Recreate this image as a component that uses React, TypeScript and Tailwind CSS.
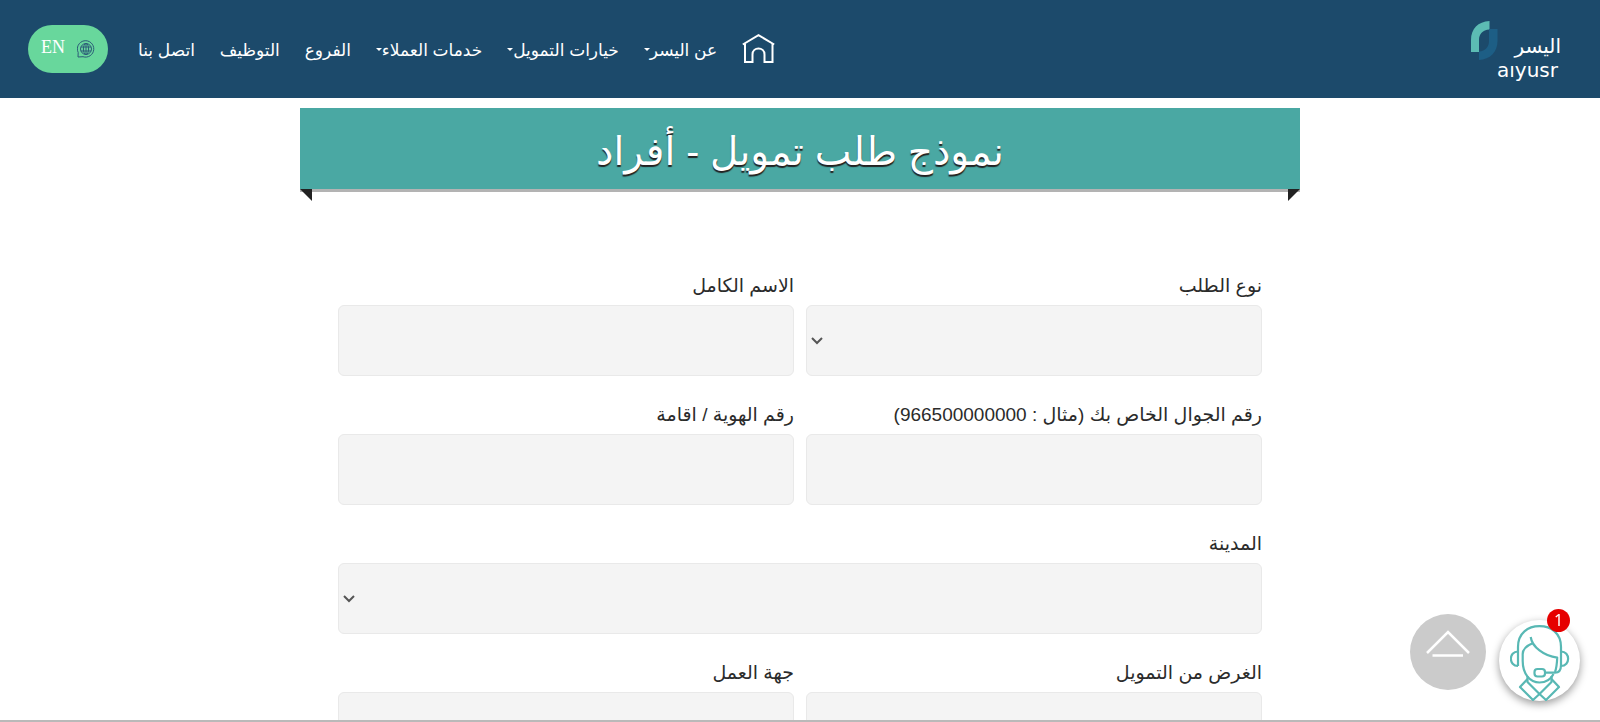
// App — صفحة طلب التمويل للأفراد
import { type ReactNode } from 'react';

interface NavItem {
  label: string;
  hasMenu?: boolean;
}

const NAV_ITEMS: NavItem[] = [
  { label: 'عن اليسر', hasMenu: true },
  { label: 'خيارات التمويل', hasMenu: true },
  { label: 'خدمات العملاء', hasMenu: true },
  { label: 'الفروع' },
  { label: 'التوظيف' },
  { label: 'اتصل بنا' },
];

function Logo() {
  return (
    <svg viewBox="0 0 92 64" className="w-[92px] h-16" role="img" aria-label="اليسر">
      <path d="M19.500 0V8.500C12.500 9 9 13 9 19V31H1V19C1 8 8 0.500 19.500 0Z" fill="#5cbcb4" />
      <path d="M19 8H27.500V20C27.500 31 20 38.500 9 39V30.500C15.500 30 19 26 19 20Z" fill="#1d5e85" />
      <text
        x="91"
        y="32"
        textAnchor="start"
        direction="rtl"
        fill="#fff"
        fontSize="20"
        fontFamily="'DejaVu Sans', sans-serif"
      >
        اليسر
      </text>
      <text x="27" y="56" direction="ltr" fill="#fff" fontSize="20" fontFamily="'DejaVu Sans', sans-serif">
        aıyusr
      </text>
    </svg>
  );
}

function HomeIcon() {
  return (
    <svg viewBox="0 0 33 30" className="w-[33px] h-[30px]" fill="none" stroke="#fff" strokeWidth="2" aria-hidden="true">
      <path d="M0.800 10.500L16.500 1.200L32.200 10.500" />
      <path d="M3 9.500V28H10.500V20.500C10.500 12.500 22.500 12.500 22.500 20.500V28H30.500V9.500" />
    </svg>
  );
}

function GlobeIcon() {
  return (
    <svg viewBox="0 0 18 18" className="w-[18px] h-[18px]" fill="none" stroke="#2c5c78" aria-hidden="true">
      <path d="M1 17L1.200 12.500A8.200 8.200 0 1 1 6 16.700Z" />
      <circle cx="9" cy="9" r="5.500" />
      <ellipse cx="9" cy="9" rx="2.600" ry="5.500" />
      <path d="M9 3.500V14.500M4 7H14M4 11H14" />
    </svg>
  );
}

function AgentIcon() {
  return (
    <svg
      viewBox="0 0 60 76"
      className="w-[60px] h-[76px]"
      fill="none"
      stroke="#58b8b4"
      strokeWidth="2.2"
      strokeLinejoin="round"
      aria-hidden="true"
    >
      <path d="M8 41V22C8 8 18 1.200 29.500 1.200S51 8 51 22V40C51 45 49 47.700 45 47.700H35" />
      <path d="M8 26.500C-1.500 26.500-1.500 41 8 41M51 26.500C60.500 26.500 60.500 41 51 41" />
      <path d="M20.700 12C22 22 34 31 47.200 32.700C47 38 46.500 43 45 47M23 18C16 21 12.700 24 12.700 29V36C12.700 49 20 57.500 29.500 57.500C36 57.500 41 54 43.500 49" />
      <rect x="24.500" y="44" width="10.500" height="7.500" rx="3" />
      <path d="M17.500 51V57L29.500 69L41.500 57V51" />
      <path d="M17.500 54L10 62L23 75L29.500 69L36 75L49 62L41.500 54" />
    </svg>
  );
}

function Header() {
  return (
    <header className="flex items-center justify-between h-[98px] shrink-0 pr-[38px] pl-7 bg-[#1c4a6b] text-white">
      <a href="#" className="pt-2">
        <Logo />
      </a>
      <div className="flex items-center w-[747px]">
        <nav className="flex flex-1 items-center justify-between text-[17px]">
          <a href="#" aria-label="الرئيسية">
            <HomeIcon />
          </a>
          {NAV_ITEMS.map((item) => (
            <a key={item.label} href="#" className="flex items-center pt-1 whitespace-nowrap">
              {item.label}
              {item.hasMenu && (
                <span className="mb-1 border-x-[3px] border-t-[3px] border-x-transparent border-t-white" />
              )}
            </a>
          ))}
        </nav>
        <button
          type="button"
          className="flex items-center justify-center gap-3 w-20 h-12 mr-[30px] rounded-full bg-[#68d79c]"
        >
          <GlobeIcon />
          <span className="pb-1 font-['Liberation_Serif',serif] text-lg leading-6">EN</span>
        </button>
      </div>
    </header>
  );
}

function Banner({ children }: { children: ReactNode }) {
  return (
    <div>
      <h1 className="h-[81px] pt-1 bg-[#4aa8a3] text-center text-[39px] leading-[80px] text-white shadow-[0_3px_0_#b3b3b3] [text-shadow:0_2px_1px_#222]">
        {children}
      </h1>
      <div className="relative flex justify-between">
        <span className="border-t-[12px] border-l-[12px] border-t-[#222] border-l-transparent -scale-x-100" />
        <span className="border-t-[12px] border-l-[12px] border-t-[#222] border-l-transparent" />
      </div>
    </div>
  );
}

interface FieldProps {
  id: string;
  label: string;
  type?: 'text' | 'tel' | 'select';
  wide?: boolean;
}

function Field({ id, label, type = 'text', wide = false }: FieldProps) {
  const box = 'block w-full h-[71px] rounded-md border border-[#e9e9e9] bg-[#f4f4f4] px-4';
  return (
    <div className={wide ? 'col-span-2' : ''}>
      <label htmlFor={id} className="block h-10 pt-0.5 text-[19px] leading-[38px]">
        {label}
      </label>
      {type === 'select' ? (
        <div className="relative">
          <select id={id} className={`${box} appearance-none`} />
          <svg
            viewBox="0 0 12 8"
            className="pointer-events-none absolute left-[5px] top-8 w-3 h-2"
            fill="none"
            stroke="#555"
            strokeWidth="2"
            aria-hidden="true"
          >
            <path d="M1 1L6 6L11 1" />
          </svg>
        </div>
      ) : (
        <input id={id} type={type} className={box} />
      )}
    </div>
  );
}

export default function App() {
  return (
    <div
      dir="rtl"
      className="flex flex-col h-screen overflow-hidden border-b-2 border-[#b9b9b9] bg-white font-['Liberation_Sans','DejaVu_Sans',sans-serif] text-[#2b2b2b]"
    >
      <Header />
      <main className="flex-1 min-h-0 overflow-hidden pt-2.5">
        <div className="w-full max-w-[1000px] mx-auto">
          <Banner>نموذج طلب تمويل - أفراد</Banner>
          <form className="grid grid-cols-2 gap-x-3 gap-y-[18px] px-[38px] pt-16">
            <Field id="request-type" label="نوع الطلب" type="select" />
            <Field id="full-name" label="الاسم الكامل" />
            <Field id="mobile" label="رقم الجوال الخاص بك (مثال : 966500000000)" type="tel" />
            <Field id="national-id" label="رقم الهوية / اقامة" />
            <Field id="city" label="المدينة" type="select" wide />
            <Field id="purpose" label="الغرض من التمويل" />
            <Field id="employer" label="جهة العمل" />
          </form>
        </div>
      </main>

      {/* أزرار عائمة */}
      <div className="fixed bottom-[21px] right-5 flex items-start gap-[13px]">
        <button
          type="button"
          aria-label="المحادثة"
          className="relative flex items-end justify-center w-[81px] h-[81px] mt-1.5 rounded-full bg-white shadow-[0_3px_8px_rgba(0,0,0,0.4)]"
        >
          <AgentIcon />
          <span className="absolute -top-[11px] right-2.5 w-[23px] h-[23px] rounded-full bg-[#e60000] font-['Noto_Sans',sans-serif] text-base leading-[23px] text-white">
            1
          </span>
        </button>
        <button
          type="button"
          aria-label="إلى الأعلى"
          className="flex justify-center w-[76px] h-[76px] pt-4 rounded-full bg-[#cbcbcb]"
        >
          <svg viewBox="0 0 44 28" className="w-11 h-7" fill="none" stroke="#fff" strokeWidth="2.500" aria-hidden="true">
            <path d="M1 23L22 2L43 23M6.500 25.500H37" />
          </svg>
        </button>
      </div>
    </div>
  );
}
